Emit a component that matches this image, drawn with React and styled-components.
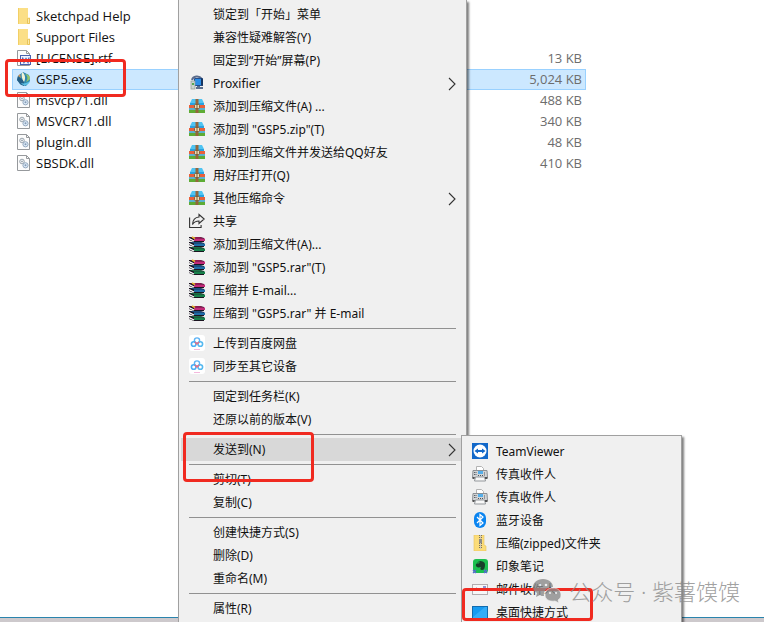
import React from "react";

import styled, { createGlobalStyle, css } from "styled-components";

// ==> Icons
const FolderIcon = () => (
  <svg width="16" height="16" viewBox="0 0 16 16">
    <path d="M2 0h10v10l2 1v5H2z" fill="#fbdf86" />
    <path d="M2 0h1v16H2z" fill="#f2cf66" />
    <path d="M11.500 15.500v-5l2-.5v5.500z" fill="#fbe9a8" stroke="#e8c45c" />
  </svg>
);

const Sheet = ({ children }) => (
  <svg width="16" height="16" viewBox="0 0 16 16">
    <path d="M1.500.5h9l3 3v12h-12z" fill="#fcfcfc" stroke="#96999c" />
    <path d="M10.500.5v3h3" fill="none" stroke="#96999c" />
    {children}
  </svg>
);

const DocIcon = () => (
  <Sheet>
    <rect x="4.500" y="5.500" width="10" height="9" fill="#eef2fc" stroke="#4862b0" />
    <path d="M6.500 7.500l1.500 5 2-4 2 4 1-5" fill="none" stroke="#3451ad" strokeWidth="1.200" />
  </Sheet>
);

const DllIcon = () => (
  <Sheet>
    <circle cx="6" cy="6.500" r="2.300" fill="#edf0f3" stroke="#9ba5ae" />
    <circle cx="6" cy="6.500" r=".8" fill="#8d979f" />
    <circle cx="9.500" cy="10.300" r="2.600" fill="#dceaf7" stroke="#94a9bf" />
    <circle cx="9.500" cy="10.300" r="1" fill="#839bb5" />
  </Sheet>
);

const ExeIcon = () => (
  <svg width="16" height="16" viewBox="0 0 16 16">
    <path d="M2 5l5-4 6 3 1 6-4 5-5-1-4-5z" fill="#2f88ad" />
    <path d="M2 5l6 5v5l-4-2-3-4z" fill="#265f86" />
    <path d="M6 1c-1 4 0 7 2 10 2-4 1-8-2-10z" fill="#f1f3d6" />
    <path d="M9 3c3 2 3 5 1 8 2-1 4-2 4-5-1-2-3-3-5-3z" fill="#93c46a" />
    <path d="M5 12c3 1 6 0 9-2-1 4-6 6-9 2z" fill="#5bc1e6" />
    <path d="M2 5l2-2 1 4z" fill="#c9935a" />
  </svg>
);

const ProxifierIcon = () => (
  <svg width="16" height="16" viewBox="0 0 16 16">
    <path d="M3 5c1-4 7-5 10-1" fill="none" stroke="#5b6c8c" strokeWidth="2" />
    <rect x="5" y="3" width="9" height="8" rx="1" fill="#254e8c" />
    <rect x="6" y="4" width="6" height="6" fill="#2b8fe8" />
    <path d="M12 3l2 1v7l-2-1z" fill="#17355f" />
    <path d="M8 11h3v1h3v2H7v-2h1z" fill="#5c6f8c" />
    <rect x="2" y="6" width="4" height="8" fill="#cdd5cf" stroke="#8d9993" strokeWidth=".7" />
    <rect x="3" y="8" width="2" height="2" fill="#54a852" />
  </svg>
);

const ZipIcon = () => (
  <svg width="16" height="16" viewBox="0 0 16 16">
    <path d="M3 1h10l2 4v2H1V5z" fill="#4fc4f2" />
    <path d="M1 5h14v2H1z" fill="#2aa2e0" />
    <path d="M0 7h16v3H0z" fill="#e9603a" />
    <path d="M0 10h16v2H0z" fill="#5bb0cf" />
    <path d="M0 12h16v3H0z" fill="#5eac34" />
    <path d="M6.500 1h3v14h-3z" fill="#94663c" />
    <rect x="5.500" y="6.500" width="5" height="4" rx="1" fill="#eedcb4" stroke="#80603c" />
    <path d="M8 7v3" stroke="#80603c" />
  </svg>
);

const ShareIcon = () => (
  <svg width="16" height="16" viewBox="0 0 16 16" fill="none" stroke="#333" strokeWidth="1.100">
    <path d="M.6 4.500v10h11.500V12" />
    <path d="M10 1.500l5.200 4.500-5.200 4.500V8C7 8 5 9 3.500 11.500 3.800 7 6 4.300 10 4z" />
  </svg>
);

const Book = ({ y, color, light }) => (
  <g>
    <path d={`M0 ${y}h11l4 1v4H5l-5-2z`} fill="#1b1420" />
    <path d={`M1 ${y}h10l4 1.500H5z`} fill={light} />
    <path d={`M5 ${y + 1.5}h11v2.500H5z`} fill={color} />
    <path d={`M0 ${y + 1.5}l5 2.500`} stroke="#fff" strokeWidth="1.300" />
  </g>
);

const RarIcon = () => (
  <svg width="16" height="16" viewBox="0 0 16 16">
    <Book y={11} color="#17804a" light="#1d6e45" />
    <Book y={6} color="#1f6da8" light="#1c4f82" />
    <Book y={1} color="#c22a78" light="#8f1651" />
    <path d="M3 1l3 1.500" stroke="#e3b82e" strokeWidth="1.500" />
  </svg>
);

const CloudIcon = () => (
  <svg width="16" height="16" viewBox="0 0 16 16" fill="none">
    <rect width="16" height="16" rx="3" fill="#fff" />
    <circle cx="8" cy="5.500" r="2.600" stroke="#5db3f5" strokeWidth="1.400" />
    <circle cx="4.700" cy="9" r="2.300" stroke="#4aaef5" strokeWidth="1.600" />
    <circle cx="11.300" cy="9" r="2.300" stroke="#55b9f0" strokeWidth="1.600" />
    <path d="M6 7l2 2 2-2" stroke="#ee6a80" strokeWidth="1.500" />
    <path d="M5 14.500h6" stroke="#f3b9dd" />
  </svg>
);

const TeamViewerIcon = () => (
  <svg width="16" height="16" viewBox="0 0 16 16">
    <rect width="16" height="16" fill="#1268c9" />
    <circle cx="8" cy="8" r="6.500" fill="#fff" />
    <path d="M2.500 8L6 5.500V7h4V5.500L13.500 8 10 10.500V9H6v1.500z" fill="#1268c9" />
  </svg>
);

const FaxIcon = () => (
  <svg width="16" height="16" viewBox="0 0 16 16">
    <path d="M4.500 5V.5h5l2 2V5" fill="#fff" stroke="#b3b3b3" />
    <path d="M1 4.500h14l.5 7H.5z" fill="#d2d4d6" stroke="#8d9195" />
    <path d="M2.500 6v4M4 6v4" stroke="#595f66" strokeDasharray="1 1" />
    <rect x="6" y="5" width="5" height="3" fill="#55aee9" />
    <path d="M6 9.500h5M12 7h2M12 9h2" stroke="#4f565e" strokeDasharray="1 1" />
    <path d="M3.500 11h9l1 4h-11z" fill="#f8f8f8" stroke="#93979b" />
    <path d="M.5 11h2v2h-2zM13 11h2.500v2H13z" fill="#555" />
  </svg>
);

const BluetoothIcon = () => (
  <svg width="16" height="16" viewBox="0 0 16 16">
    <rect x="2" width="12" height="16" rx="6" fill="#0a84f0" />
    <path d="M5 5l6 6-3 2.500v-11L11 5l-6 6" fill="none" stroke="#fff" strokeWidth="1.200" />
  </svg>
);

const ZippedIcon = () => (
  <svg width="16" height="16" viewBox="0 0 16 16">
    <path d="M2 0h10v10l2 1v5H2z" fill="#fbdc79" stroke="#e7c45d" strokeWidth=".6" />
    <path d="M8.500 0v14" stroke="#77705e" strokeWidth="3" strokeDasharray="1 1" />
    <path d="M8.500 0v14" stroke="#cfcabc" />
    <rect x="7" y="4" width="3" height="4" fill="#8c8b86" />
  </svg>
);

const EvernoteIcon = () => (
  <svg width="16" height="16" viewBox="0 0 16 16">
    <rect x="1" y="1" width="15" height="14" rx="3" fill="#1dc04f" />
    <path d="M4 6l3-3c4 0 6 1 6 4 0 3-1 5-3 5-2 0-2-2-1-3-3 1-6 0-5-3z" fill="#193f2a" />
    <path d="M4 5h3V3" fill="none" stroke="#1dc04f" strokeWidth=".8" />
    <path d="M1 12l3 3M4 12l-3 3M12 12l3 3M15 12l-3 3" stroke="#5965d6" strokeWidth="1.300" />
  </svg>
);

const MailIcon = () => (
  <svg width="16" height="16" viewBox="0 0 16 16">
    <rect x=".5" y="3.500" width="15" height="10" fill="#f7f7f7" stroke="#b3adb0" />
    <path d="M4 6.500l4 3 4-3" fill="none" stroke="#aaa2cf" />
    <path d="M11 5h3v2h-3z" fill="#8b92d0" />
  </svg>
);

const DesktopIcon = () => (
  <svg width="16" height="16" viewBox="0 0 16 16">
    <rect x=".5" y="2.500" width="15" height="12" fill="#189bf0" stroke="#126caf" />
    <path d="M1 13L13 3h2v11H1z" fill="#35adf8" />
  </svg>
);

const Chevron = () => (
  <svg width="8" height="14" viewBox="0 0 8 14">
    <path d="M1 1l6 6-6 6" fill="none" stroke="#333" strokeWidth="1.100" />
  </svg>
);

const WeChatIcon = () => (
  <svg width="28" height="24" viewBox="0 0 28 24">
    <path
      d="M10 0c6 0 10 4 10 8-6 0-10 4-9 9-2 0-3 0-4-1l-4 2 1-4c-3-2-4-4-4-6 0-4 4-8 10-8z"
      fill="#8b8b8b"
    />
    <path
      d="M20 9c5 0 8 3 8 7 0 2-1 4-3 5l1 3-4-2c-6 1-10-2-10-6s3-7 8-7z"
      fill="#8b8b8b"
      stroke="#f0f0f0"
      strokeWidth=".7"
    />
    <g fill="#f0f0f0">
      <circle cx="7" cy="6" r="1.300" />
      <circle cx="13" cy="6" r="1.300" />
      <circle cx="17" cy="14" r="1.100" />
      <circle cx="23" cy="14" r="1.100" />
    </g>
  </svg>
);

// ==> Data
const files = [
  { name: "Sketchpad Help", icon: FolderIcon },
  { name: "Support Files", icon: FolderIcon },
  { name: "[LICENSE].rtf", icon: DocIcon, size: "13 KB" },
  { name: "GSP5.exe", icon: ExeIcon, size: "5,024 KB", selected: true },
  { name: "msvcp71.dll", icon: DllIcon, size: "488 KB" },
  { name: "MSVCR71.dll", icon: DllIcon, size: "340 KB" },
  { name: "plugin.dll", icon: DllIcon, size: "48 KB" },
  { name: "SBSDK.dll", icon: DllIcon, size: "410 KB" },
];

const groups = [
  [
    { label: "锁定到「开始」菜单" },
    { label: "兼容性疑难解答(Y)" },
    { label: "固定到“开始”屏幕(P)" },
    { label: "Proxifier", icon: ProxifierIcon, more: true },
    { label: "添加到压缩文件(A) ...", icon: ZipIcon },
    { label: '添加到 "GSP5.zip"(T)', icon: ZipIcon },
    { label: "添加到压缩文件并发送给QQ好友", icon: ZipIcon },
    { label: "用好压打开(Q)", icon: ZipIcon },
    { label: "其他压缩命令", icon: ZipIcon, more: true },
    { label: "共享", icon: ShareIcon },
    { label: "添加到压缩文件(A)...", icon: RarIcon },
    { label: '添加到 "GSP5.rar"(T)', icon: RarIcon },
    { label: "压缩并 E-mail...", icon: RarIcon },
    { label: '压缩到 "GSP5.rar" 并 E-mail', icon: RarIcon },
  ],
  [
    { label: "上传到百度网盘", icon: CloudIcon },
    { label: "同步至其它设备", icon: CloudIcon },
  ],
  [{ label: "固定到任务栏(K)" }, { label: "还原以前的版本(V)" }],
  [{ label: "发送到(N)", more: true, active: true }],
  [{ label: "剪切(T)" }, { label: "复制(C)" }],
  [
    { label: "创建快捷方式(S)" },
    { label: "删除(D)" },
    { label: "重命名(M)" },
  ],
  [{ label: "属性(R)" }],
];

const targets = [
  { label: "TeamViewer", icon: TeamViewerIcon },
  { label: "传真收件人", icon: FaxIcon },
  { label: "传真收件人", icon: FaxIcon },
  { label: "蓝牙设备", icon: BluetoothIcon },
  { label: "压缩(zipped)文件夹", icon: ZippedIcon },
  { label: "印象笔记", icon: EvernoteIcon },
  { label: "邮件收件人", icon: MailIcon },
  { label: "桌面快捷方式", icon: DesktopIcon },
];

const Item = ({ label, icon: Icon, more, active }) => (
  <MenuItem type="button" role="menuitem" $active={active}>
    <IconSlot>{Icon && <Icon />}</IconSlot>
    <Label>{label}</Label>
    {more && <Chevron />}
  </MenuItem>
);

const App = () => (
  <Screen>
    <GlobalStyle />
    <Content>
      <FileTable>
        <tbody>
          {files.map(({ name, icon: Icon, size, selected }) => (
            <FileRow key={name} $selected={selected}>
              <td>
                <FileName>
                  <Icon />
                  {name}
                </FileName>
              </td>
              <SizeCell>{size}</SizeCell>
            </FileRow>
          ))}
        </tbody>
      </FileTable>
    </Content>
    <Taskbar />

    <ContextMenu role="menu">
      {groups.map((items, i) => (
        <Group key={i}>
          {items.map((item) => (
            <Item key={item.label} {...item} />
          ))}
        </Group>
      ))}
    </ContextMenu>

    <SubMenu role="menu">
      {targets.map((item, i) => (
        <Item key={i} {...item} />
      ))}
    </SubMenu>

    <Marker $x={5} $y={59} $w={121} $h={38} />
    <Marker $x={183} $y={432} $w={131} $h={50} />
    <Marker $x={462} $y={588} $w={131} $h={33} />

    <Watermark>
      <WeChatIcon />
      <span>公众号 · 紫薯馍馍</span>
    </Watermark>
  </Screen>
);

const GlobalStyle = createGlobalStyle`
  * {
    box-sizing: border-box;
  }

  body {
    margin: 0;
    background: #fff;
    font-family: "Noto Sans", "Noto Sans CJK SC", sans-serif;
    font-size: 12px;
    color: #111;
  }

  svg {
    display: block;
    flex: none;
  }
`;

const Screen = styled.div`
  position: relative;
  display: flex;
  flex-direction: column;
  height: 100vh;
  overflow: hidden;
`;

const Content = styled.main`
  flex: 1;
  padding: 6px 178px 0 12px;
`;

const Taskbar = styled.footer`
  height: 5px;
  border-top: 1px solid #2a84ad;
  background: #cdc9cc;
`;

const FileTable = styled.table`
  width: 100%;
  border-collapse: collapse;
  font-family: "Open Sans", "Noto Sans CJK SC", sans-serif;
  font-size: 13px;
  line-height: 20px;

  td {
    height: 21px;
    padding: 0 4px 1px;
  }
`;

const FileRow = styled.tr`
  ${({ $selected }) =>
    $selected &&
    css`
      background: #cce8ff;
      outline: 1px solid #99d1ff;
      outline-offset: -1px;
    `}
`;

const FileName = styled.div`
  display: flex;
  align-items: center;
  gap: 4px;
`;

const SizeCell = styled.td`
  text-align: right;
  color: #6d6d6d;
`;

const popup = css`
  position: absolute;
  border: 1px solid #a0a0a0;
  background: #f0f0f0;
  box-shadow: 2px 2px 2px rgba(0, 0, 0, 0.5);
`;

const ContextMenu = styled.div`
  ${popup}
  top: 0;
  left: 178px;
  min-width: 289px;
  padding: 3px 2px;
  border-top: 0;
`;

const SubMenu = styled.div`
  ${popup}
  top: 435px;
  left: 461px;
  min-width: 221px;
  padding: 4px 2px;
`;

const Group = styled.div`
  & + &::before {
    content: "";
    display: block;
    height: 1px;
    margin: 3px 8px;
    background: #919191;
  }
`;

const MenuItem = styled.button`
  display: flex;
  align-items: center;
  width: 100%;
  height: 23px;
  padding: 0 8px;
  border: 0;
  background: ${({ $active }) => ($active ? "#d8d8d8" : "transparent")};
  color: inherit;
  font: inherit;
  line-height: 23px;
  text-align: left;
  white-space: nowrap;
`;

const IconSlot = styled.span`
  width: 16px;
  margin-right: 8px;
  padding-bottom: 1px;
`;

const Label = styled.span`
  flex: 1;
`;

// ==> Red frame drawn over the important entries
const Marker = styled.div`
  position: absolute;
  left: ${({ $x }) => $x}px;
  top: ${({ $y }) => $y}px;
  width: ${({ $w }) => $w}px;
  height: ${({ $h }) => $h}px;
  border: 3px solid #f02a20;
  border-radius: 4px;
  pointer-events: none;
`;

const Watermark = styled.div`
  position: absolute;
  right: 24px;
  bottom: 17px;
  display: flex;
  align-items: center;
  gap: 8px;
  font-size: 22px;
  font-weight: 300;
  line-height: 28px;
  color: #8b8b8b;
  opacity: 0.8;
  pointer-events: none;
`;

export default App;
